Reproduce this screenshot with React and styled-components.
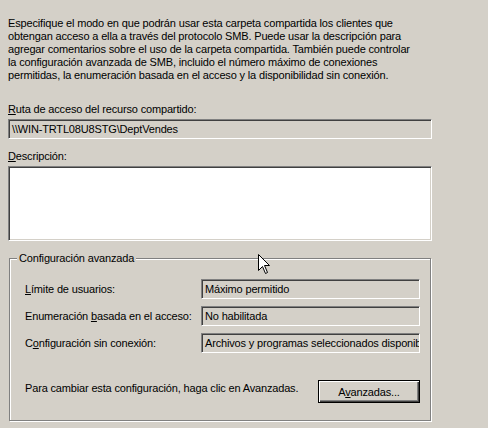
import React from 'react';
import styled, { createGlobalStyle } from 'styled-components';

const GlobalStyle = createGlobalStyle`
  html, body {
    margin: 0;
    background: #d4d0c8;
  }
  body {
    font-family: "Liberation Sans", Arial, sans-serif;
    font-size: 11px;
    letter-spacing: -0.16px;
    color: #000;
  }
`;

const Page = styled.div`
  position: relative;
  width: 424px;
  height: 428px;
  padding: 17px 0 0 8px;
  box-sizing: content-box;
`;

const Intro = styled.p`
  margin: 0;
  line-height: 13px;
`;

const Label = styled.div`
  line-height: 13px;
  margin-top: ${(p) => p.$top}px;
  margin-bottom: 3px;
`;

const Key = styled.span`
  text-decoration: underline;
  text-underline-offset: 1px;
`;

const Sunken = styled.div`
  box-sizing: border-box;
  border: 1px solid;
  border-color: #808080 #ffffff #ffffff #808080;
  box-shadow: inset 1px 1px #404040, inset -1px -1px #d4d0c8;
  background: ${(p) => (p.$white ? '#ffffff' : '#d4d0c8')};
  height: ${(p) => p.$h}px;
  padding: 3px 3px 0;
  line-height: 13px;
  white-space: nowrap;
  overflow: hidden;
`;

const Group = styled.fieldset`
  margin: 11px 0 0 1px;
  width: 421px;
  box-sizing: border-box;
  border: 1px solid #808080;
  box-shadow: inset 1px 1px #ffffff, 1px 1px #ffffff;
  padding: 14px 10px 17px 15px;
`;

const Legend = styled.legend`
  margin-left: -8px;
  padding: 0 2px;
  line-height: 13px;
  background: #d4d0c8;
`;

const Rows = styled.div`
  display: grid;
  grid-template-columns: 176px 219px;
  row-gap: 7px;
  align-items: center;
`;

const Footer = styled.div`
  display: flex;
  justify-content: space-between;
  align-items: center;
  margin-top: 27px;
`;

const FooterText = styled.span`
  line-height: 13px;
  margin-top: -6px;
`;

const Button = styled.button`
  width: 102px;
  height: 23px;
  box-sizing: border-box;
  border: 1px solid #000;
  background: #d4d0c8;
  box-shadow: inset 1px 1px #ffffff, inset -1px -1px #404040, inset -2px -2px #808080;
  font: inherit;
  letter-spacing: inherit;
  color: #000;
  padding: 0;
`;

const Cursor = styled.svg`
  position: absolute;
  left: 258px;
  top: 254px;
`;

export default function App() {
  return (
    <Page>
      <GlobalStyle />
      <Intro>
        Especifique el modo en que podrán usar esta carpeta compartida los clientes que
        <br />
        obtengan acceso a ella a través del protocolo SMB. Puede usar la descripción para
        <br />
        agregar comentarios sobre el uso de la carpeta compartida. También puede controlar
        <br />
        la configuración avanzada de SMB, incluido el número máximo de conexiones
        <br />
        permitidas, la enumeración basada en el acceso y la disponibilidad sin conexión.
      </Intro>

      <Label $top={21}>
        <Key>R</Key>uta de acceso del recurso compartido:
      </Label>
      <Sunken $h={20}>\\WIN-TRTL08U8STG\DeptVendes</Sunken>

      <Label $top={11}>
        <Key>D</Key>escripción:
      </Label>
      <Sunken $h={75} $white />

      <Group>
        <Legend>Configuración avanzada</Legend>
        <Rows>
          <span>
            <Key>L</Key>ímite de usuarios:
          </span>
          <Sunken $h={20}>Máximo permitido</Sunken>
          <span>
            Enumeración <Key>b</Key>asada en el acceso:
          </span>
          <Sunken $h={20}>No habilitada</Sunken>
          <span>
            C<Key>o</Key>nfiguración sin conexión:
          </span>
          <Sunken $h={20}>Archivos y programas seleccionados disponib</Sunken>
        </Rows>
        <Footer>
          <FooterText>Para cambiar esta configuración, haga clic en Avanzadas.</FooterText>
          <Button>
            A<Key>v</Key>anzadas...
          </Button>
        </Footer>
      </Group>

      <Cursor width="13" height="21" viewBox="0 0 13 21">
        <path
          d="M0.5 0.5 L0.5 16.5 L4.5 12.5 L7.5 19.5 L9.5 18.5 L6.5 11.5 L11.5 11.5 Z"
          fill="#fff"
          stroke="#000"
          strokeWidth="1"
        />
      </Cursor>
    </Page>
  );
}
